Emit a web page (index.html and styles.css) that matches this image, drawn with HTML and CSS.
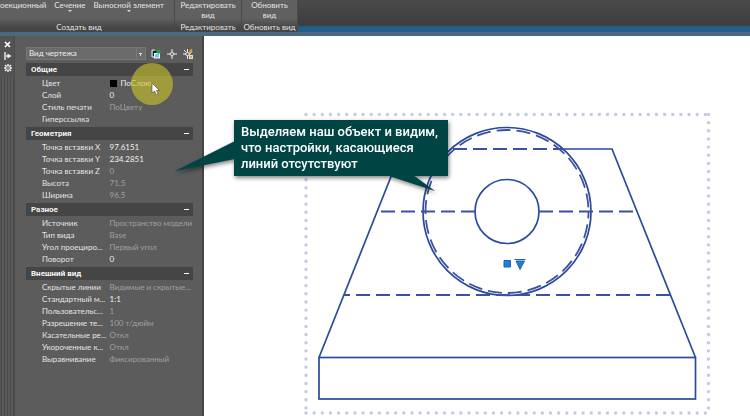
FILE: index.html
```html
<!DOCTYPE html>
<html lang="ru">
<head>
<meta charset="utf-8">
<title>Вид чертежа</title>
<link rel="stylesheet" href="styles.css">
</head>
<body>
<div class="app">
  <header class="ribbon">
    <section class="panel panel-create">
      <div class="tools">
        <button class="tool">оекционный</button>
        <button class="tool">Сечение<span class="caret"></span></button>
        <button class="tool">Выносной элемент<span class="caret"></span></button>
      </div>
      <h2 class="caption">Создать вид</h2>
    </section>
    <section class="panel panel-edit">
      <button class="tool">Редактировать<br>вид</button>
      <h2 class="caption">Редактировать</h2>
    </section>
    <section class="panel panel-update">
      <button class="tool">Обновить<br>вид</button>
      <h2 class="caption">Обновить вид</h2>
    </section>
    <div class="ribbon-rest"></div>
  </header>

  <main class="workspace">
    <aside class="palette">
      <div class="strip">
        <button class="strip-button" aria-label="Закрыть"><svg width="7" height="7" viewBox="0 0 7 7"><path d="M1 1L6 6M6 1L1 6" stroke="#fff" stroke-width="1.6"/></svg></button>
        <button class="strip-button" aria-label="Автоскрытие"><svg width="8" height="8" viewBox="0 0 8 8"><path d="M1 0V8M2 4H4" stroke="#eee" stroke-width="1.4"/><path d="M3.500 1.500L7.500 4L3.500 6.500Z" fill="#eee"/></svg></button>
        <button class="strip-button" aria-label="Свойства"><svg width="8" height="8" viewBox="0 0 8 8"><path d="M4 0V8M0 4H8M1 1L7 7M7 1L1 7" stroke="#f4f4f4" stroke-width="1.300"/><circle cx="4" cy="4" r="2.300" fill="#555" stroke="#f4f4f4"/><circle cx="4" cy="4" r=".7" fill="#eee"/></svg></button>
        <div class="grip"></div>
      </div>
      <div class="properties">
        <div class="picker">
          <select class="type" aria-label="Тип объекта"><option>Вид чертежа</option></select>
          <button class="pick" aria-label="Переключить PICKADD"><svg width="10" height="10" viewBox="0 0 10 10"><path d="M1 5V1H4M1 5V8H3" fill="none" stroke="#dfe9ee"/><path d="M2 2H6V5H3V7H2Z" fill="#14242f"/><rect x="3.500" y="4.500" width="5" height="4.500" fill="#7cc3e6" stroke="#eef7ff"/><circle cx="7.500" cy="2.500" r="2.200" fill="#18a548"/></svg></button>
          <button class="pick" aria-label="Выбрать объекты"><svg width="10" height="10" viewBox="0 0 10 10"><path d="M5 0V3M5 7V10M0 5H3M7 5H10" stroke="#e8e8e8"/><rect x="3.500" y="3.500" width="3" height="3" fill="none" stroke="#e8e8e8" transform="rotate(45 5 5)"/></svg></button>
          <button class="pick" aria-label="Быстрый выбор"><svg width="10" height="10" viewBox="0 0 10 10"><path d="M4.500 0V3M4.500 7V10M0 5H3M1 1L3 3" stroke="#e8e8e8"/><rect x="3" y="3.500" width="3" height="3" fill="none" stroke="#e8e8e8" transform="rotate(45 4.500 5)"/><path d="M9 0L6.500 3H8.500L7 5" fill="none" stroke="#e6a653" stroke-width="1.300"/><rect x="6.500" y="6.500" width="3" height="3" fill="#b7aa98" stroke="#eadfce"/></svg></button>
        </div>

        <table class="group">
          <thead><tr><th colspan="2"><div class="head">Общие<button class="fold" aria-label="Свернуть"></button></div></th></tr></thead>
          <tbody>
            <tr><th>Цвет</th><td class="on"><span class="swatch"></span>ПоСлою</td></tr>
            <tr><th>Слой</th><td class="on">0</td></tr>
            <tr><th>Стиль печати</th><td>ПоЦвету</td></tr>
            <tr><th>Гиперссылка</th><td></td></tr>
          </tbody>
        </table>
        <table class="group">
          <thead><tr><th colspan="2"><div class="head">Геометрия<button class="fold" aria-label="Свернуть"></button></div></th></tr></thead>
          <tbody>
            <tr><th>Точка вставки X</th><td class="on">97.6151</td></tr>
            <tr><th>Точка вставки Y</th><td class="on">234.2851</td></tr>
            <tr><th>Точка вставки Z</th><td>0</td></tr>
            <tr><th>Высота</th><td>71.5</td></tr>
            <tr><th>Ширина</th><td>96.5</td></tr>
          </tbody>
        </table>
        <table class="group">
          <thead><tr><th colspan="2"><div class="head">Разное<button class="fold" aria-label="Свернуть"></button></div></th></tr></thead>
          <tbody>
            <tr><th>Источник</th><td>Пространство модели</td></tr>
            <tr><th>Тип вида</th><td>Base</td></tr>
            <tr><th>Угол проециро...</th><td>Первый угол</td></tr>
            <tr><th>Поворот</th><td class="on">0</td></tr>
          </tbody>
        </table>
        <table class="group">
          <thead><tr><th colspan="2"><div class="head">Внешний вид<button class="fold" aria-label="Свернуть"></button></div></th></tr></thead>
          <tbody>
            <tr><th>Скрытые линии</th><td>Видимые и скрытые...</td></tr>
            <tr><th>Стандартный м...</th><td class="on">1:1</td></tr>
            <tr><th>Пользовательс...</th><td>1</td></tr>
            <tr><th>Разрешение те...</th><td>100 т/дюйм</td></tr>
            <tr><th>Касательные ре...</th><td>Откл</td></tr>
            <tr><th>Укороченные к...</th><td>Откл</td></tr>
            <tr><th>Выравнивание</th><td>Фиксированный</td></tr>
          </tbody>
        </table>
      </div>
      <svg class="pointer" width="44" height="44" viewBox="0 0 44 44" aria-hidden="true">
        <circle cx="22" cy="22" r="21" fill="#c9c22a" fill-opacity=".62"/>
        <path d="M22 21V31L24.500 29L26.500 33L28 32L26.500 28.500H29.500Z" fill="#fff" stroke="#444" stroke-width=".6"/>
      </svg>
    </aside>

    <div class="canvas">
      <svg class="drawing" viewBox="204 36 546 380" role="img" aria-label="Чертёж">
        <g class="frame">
          <path d="M306 114.500H708.500M708.500 114.500V413M306 413H708.500M306 114.500V413"/>
        </g>
        <g class="solid">
          <path d="M319 357.500L402 149M563 149H612L695.500 357.500"/>
          <rect x="319" y="357.500" width="376.500" height="41.500"/>
          <circle cx="507" cy="211.500" r="84"/>
          <circle cx="507" cy="211.500" r="32"/>
        </g>
        <g class="hidden-lines">
          <path d="M563 149H450" stroke-dashoffset="4"/>
          <path d="M475 211.500H377M539 211.500H637"/>
          <path d="M344 295H670" stroke-dashoffset="8"/>
          <circle cx="507" cy="211.500" r="81.500" stroke-dashoffset="7"/>
        </g>
        <path class="grip-mark" d="M504 260.500H510.500V267H504ZM514.500 259.500H525.500M516 261L520 269.500L524.500 261Z"/>
      </svg>
    </div>

    <div class="callout">
      <svg class="tails" width="274" height="72" viewBox="174 120 274 72" aria-hidden="true">
        <path d="M235 141L175 171L235 159ZM386 175L435 191L413 175Z" fill="#004543"/>
      </svg>
      <p class="note">Выделяем наш объект и видим,<br>что настройки, касающиеся<br>линий отсутствуют</p>
    </div>
  </main>
</div>
</body>
</html>
```

FILE: styles.css
```css
* { box-sizing: border-box; }

body {
  margin: 0;
  background: #fff;
  color: #e4e4e4;
  font: 8px/12px Lato, "Open Sans", sans-serif;
}

button {
  padding: 0;
  border: 0;
  background: none;
  color: inherit;
  font: inherit;
}

.app {
  display: flex;
  flex-direction: column;
  min-height: 100vh;
  overflow: hidden;
}

/* Ribbon */
.ribbon {
  display: flex;
  height: 36px;
  border-bottom: 4px solid #4f6882;
  background: #4b4b4b;
}

.panel {
  display: flex;
  flex-direction: column;
  justify-content: space-between;
  align-items: center;
  overflow: hidden;
  border-right: 1px solid #4a4a4a;
  background: linear-gradient(#606060 0 18px, #454545 28px);
}

.panel-create { width: 175px; }
.panel-edit { width: 67px; }
.panel-update { width: 56px; }

.panel-create .caption { padding-right: 16px; }

.tools {
  display: flex;
  justify-content: space-between;
  align-items: flex-start;
  width: 100%;
  padding-right: 10px;
}

.tool {
  flex: none;
  line-height: 10px;
  white-space: nowrap;
}

.caret {
  display: block;
  width: 4px;
  margin: 0 auto;
  border: 2px solid transparent;
  border-top-color: #ddd;
}

.caption {
  margin: 0;
  font-size: 8px;
  font-weight: 400;
  line-height: 9px;
  white-space: nowrap;
}

.ribbon-rest {
  flex: 1;
  background: linear-gradient(#4a4a4a, #3d3d3d 25px, #225f8d 27px);
}

/* Workspace */
.workspace {
  position: relative;
  display: flex;
  flex: 1;
  align-items: stretch;
}

.palette {
  position: relative;
  display: flex;
  flex: none;
  width: 204px;
  border-right: 2px solid #444;
  background: #5c5c5c;
}

.strip {
  display: flex;
  flex-direction: column;
  align-items: center;
  width: 15px;
  padding: 2px 0 0 1px;
  border-right: 1px solid #4c4c4c;
  background: #535353;
}

.strip-button {
  display: grid;
  place-items: center;
  width: 12px;
  height: 12px;
}

.grip {
  flex: 1;
  width: 13px;
  margin-top: 3px;
  background: repeating-linear-gradient(90deg, #4b4b4b 0 1px, #5a5a5a 1px 3px);
}

.properties {
  flex: 1;
  padding: 11px 9px 0 11px;
}

.picker {
  display: flex;
  align-items: center;
  gap: 6px;
  margin-bottom: 3px;
}

.type {
  width: 120px;
  height: 13px;
  margin-right: -1px;
  padding: 0 2px;
  appearance: none;
  border: 1px solid #777;
  border-radius: 0;
  background:
    conic-gradient(from -27deg at 50% 100%, #ddd 54deg, transparent 0) right 3px top 5px / 3px 3px no-repeat,
    linear-gradient(#777, #777) right 8px top 0 / 1px 100% no-repeat,
    #6b6b6b;
  color: #eee;
  font: inherit;
  line-height: 11px;
}

.pick {
  width: 10px;
  height: 10px;
}

.pick svg { display: block; }

.group {
  width: 167px;
  margin-bottom: 2px;
  border-collapse: collapse;
  table-layout: fixed;
}

.group th,
.group td {
  height: 12px;
  padding: 0;
  font-weight: 400;
  line-height: 12px;
  text-align: left;
  white-space: nowrap;
}

.group tbody th {
  width: 82px;
  padding-left: 16px;
}

.group td { color: #a0a0a0; }
.group .on { color: #f0f0f0; }

.head {
  display: flex;
  align-items: center;
  justify-content: space-between;
  height: 13px;
  margin-bottom: 1px;
  padding: 0 4px 0 5px;
  background: #454545;
  color: #f4f4f4;
  font-family: Roboto, sans-serif;
  font-weight: 700;
}

.fold {
  width: 5px;
  height: 1px;
  background: #fff;
}

.swatch {
  display: inline-block;
  width: 7px;
  height: 7px;
  margin-right: 4px;
  background: #000;
  vertical-align: -1px;
}

.pointer {
  position: absolute;
  top: 26px;
  left: 130px;
}

.canvas {
  flex: 1;
  min-width: 0;
}

.drawing {
  display: block;
  width: 100%;
}

.drawing path,
.drawing rect,
.drawing circle { fill: none; }

.frame {
  stroke: #c3c9e8;
  stroke-width: 3.4;
  stroke-linecap: round;
  stroke-dasharray: 0 8.15;
}

.solid {
  stroke: #2a4b9c;
  stroke-width: 1.7;
}

.hidden-lines {
  stroke: #3c51a0;
  stroke-width: 1.8;
  stroke-dasharray: 14 6;
}

.drawing .grip-mark {
  fill: #1b7fe0;
  stroke: #2560a8;
}

/* Callout */
.callout {
  position: absolute;
  top: 84px;
  left: 234px;
  width: 214px;
  filter: drop-shadow(1px 2px 2px rgb(0 0 0 / 50%));
}

.tails {
  position: absolute;
  top: 0;
  left: -60px;
}

.note {
  position: relative;
  margin: 0;
  padding: 4px 0 4px 7px;
  background: #004543;
  color: #fff;
  font: 500 13px/16px Roboto, sans-serif;
  white-space: nowrap;
}
```
